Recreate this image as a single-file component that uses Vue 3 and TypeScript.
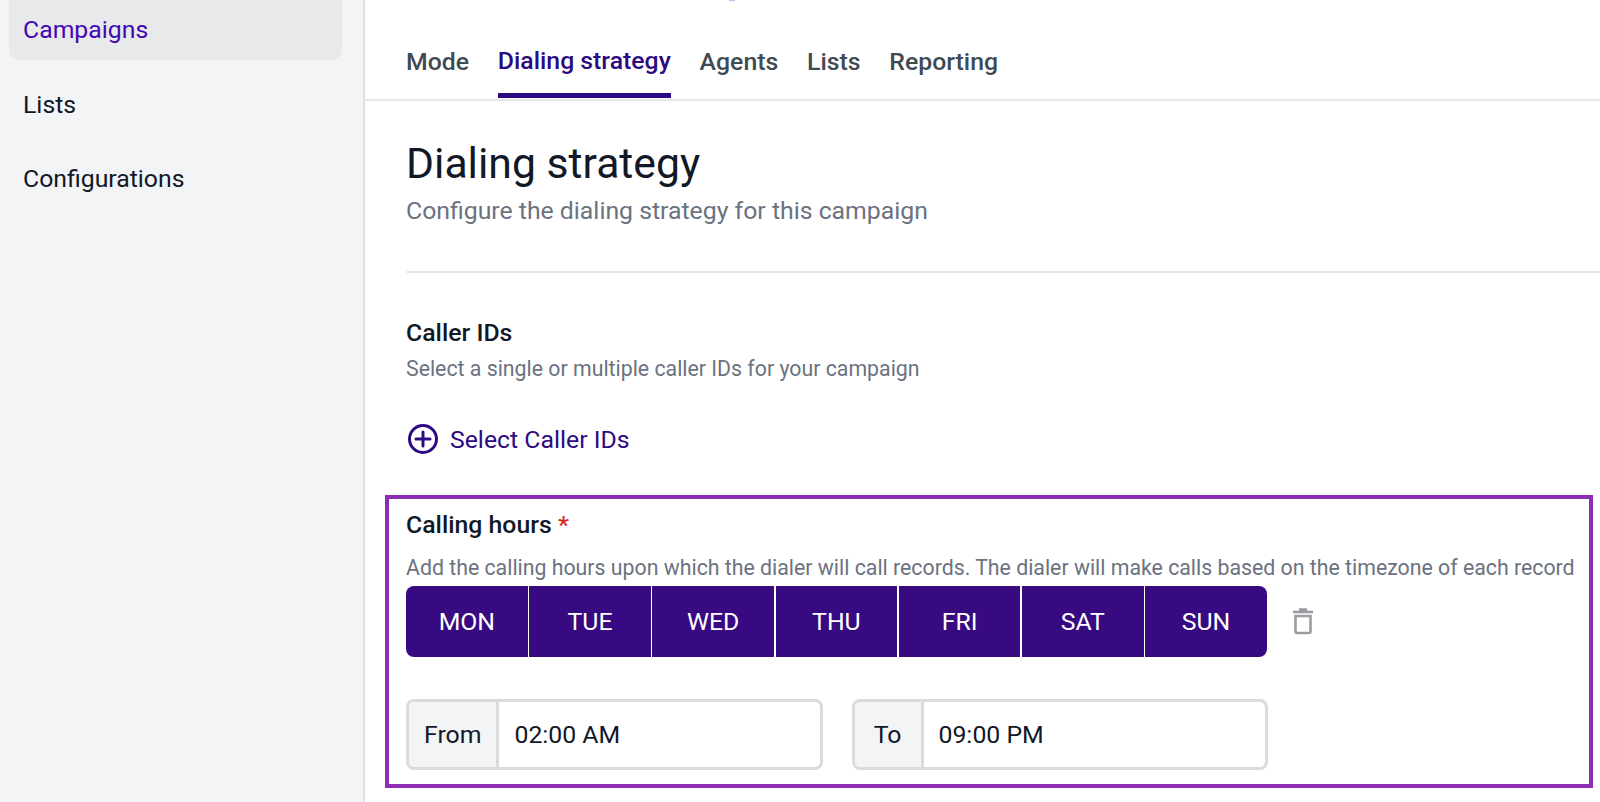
<script setup lang="ts">
const navItems = ['Campaigns', 'Lists', 'Configurations']
const tabs = ['Mode', 'Dialing strategy', 'Agents', 'Lists', 'Reporting']
const days = ['MON', 'TUE', 'WED', 'THU', 'FRI', 'SAT', 'SUN']
const hours = [
  { label: 'From', value: '02:00 AM' },
  { label: 'To', value: '09:00 PM' }
]
</script>

<template>
  <div class="page">
    <aside class="sidebar">
      <a
        v-for="(item, i) in navItems"
        :key="item"
        class="nav-item"
        :class="{ active: i === 0 }"
      >{{ item }}</a>
    </aside>

    <main class="main">
      <nav class="tabs">
        <!-- tail of a heading cut off by the top of the page -->
        <span class="cut-off"></span>
        <a
          v-for="tab in tabs"
          :key="tab"
          class="tab"
          :class="{ active: tab === 'Dialing strategy' }"
        >{{ tab }}</a>
      </nav>

      <div class="content">
        <header class="head">
          <h1 class="title">Dialing strategy</h1>
          <p class="subtitle">Configure the dialing strategy for this campaign</p>
        </header>

        <section class="caller-ids">
          <h2 class="label">Caller IDs</h2>
          <p class="hint">Select a single or multiple caller IDs for your campaign</p>
          <a class="add-link">
            <svg width="32" height="32" viewBox="0 0 32 32" fill="none" stroke="#2e0a82" stroke-width="3">
              <circle cx="16" cy="16" r="13.5" />
              <path d="M16 9v14M9 16h14" stroke-linecap="round" />
            </svg>
            Select Caller IDs
          </a>
        </section>

        <section class="hours">
          <h2 class="label">Calling hours <span class="req">*</span></h2>
          <p class="hint hint-tight">Add the calling hours upon which the dialer will call records. The dialer will make calls based on the timezone of each record</p>

          <div class="days-row">
            <div class="days">
              <button v-for="d in days" :key="d" class="day">{{ d }}</button>
            </div>
            <svg class="trash" width="24" height="28" viewBox="0 0 24 28" fill="none">
              <path d="M8 2.5h8M2 5h20" stroke="#9a9ca1" stroke-width="2.4" />
              <path d="M4.5 9h15v15.5a1.5 1.5 0 0 1-1.5 1.5H6a1.5 1.5 0 0 1-1.5-1.5z" stroke="#9a9ca1" stroke-width="2.6" />
            </svg>
          </div>

          <div class="time-row">
            <div v-for="h in hours" :key="h.label" class="time-field">
              <span class="addon">{{ h.label }}</span>
              <span class="time-value">{{ h.value }}</span>
            </div>
          </div>
        </section>
      </div>
    </main>
  </div>
</template>

<style>
html, body { margin: 0; background: #fff; }
</style>

<style scoped>
.page {
  display: flex;
  width: 1600px;
  height: 802px;
  overflow: hidden;
  font-family: Roboto, 'Liberation Sans', sans-serif;
  color: #111827;
}

.sidebar {
  width: 365px;
  flex-shrink: 0;
  box-sizing: border-box;
  background: #f3f4f6;
  border-right: 2px solid #dfe1e5;
  padding: 0 21px 0 9px;
  display: flex;
  flex-direction: column;
  gap: 14px;
  margin-top: -10px;
}
.nav-item {
  height: 60px;
  padding: 0 14px;
  display: flex;
  align-items: center;
  font-size: 24.8px;
  border-radius: 10px;
  color: #111827;
}
.nav-item.active {
  height: 70px;
  padding-top: 8px;
  box-sizing: border-box;
  background: #e8e9eb;
  color: #4308b5;
}

.main { flex: 1; min-width: 0; }

.tabs {
  position: relative;
  height: 101px;
  box-sizing: border-box;
  border-bottom: 2px solid #e5e7eb;
  padding: 0 0 0 41px;
  display: flex;
  align-items: flex-end;
  gap: 28.8px;
}
.cut-off {
  position: absolute;
  top: 0;
  left: 364px;
  width: 6px;
  height: 1px;
  background: #c4b8e4;
}
.tab {
  height: 62px;
  box-sizing: border-box;
  font-size: 24.8px;
  font-weight: 500;
  line-height: 50px;
  color: #414a53;
}
.tab.active {
  color: #2e0a82;
  border-bottom: 5px solid #2e0a82;
  margin-bottom: 1px;
}

.content { padding-left: 41px; }

.head {
  padding: 36px 0 45px;
  border-bottom: 2px solid #e5e7eb;
}
.title {
  margin: 0;
  font-size: 42.7px;
  font-weight: 400;
  line-height: 52px;
  color: #111827;
}
.subtitle {
  margin: 7px 0 0;
  font-size: 24.8px;
  line-height: 30px;
  color: #6b7280;
}

.caller-ids { padding-top: 45px; }
.label {
  margin: 0;
  font-size: 24.8px;
  font-weight: 500;
  line-height: 30px;
  color: #111827;
}
.req { color: #d32f1e; }
.hint {
  margin: 7px 0 0;
  font-size: 21.3px;
  line-height: 28px;
  color: #6b7280;
  white-space: nowrap;
}
.hint-tight { margin-top: 14px; }
.add-link {
  margin-top: 40px;
  display: flex;
  align-items: center;
  gap: 11px;
  font-size: 24.8px;
  color: #2e0a82;
}
.add-link svg { margin-left: 1px; }

.hours {
  margin: 40px 7px 0 -21px;
  height: 293px;
  box-sizing: border-box;
  border: 4px solid #8c2eb5;
  padding: 11px 0 0 17px;
}

.days-row { display: flex; align-items: center; gap: 24px; margin-top: 4px; }
.days {
  display: flex;
  gap: 1.5px;
  border-radius: 8px;
  overflow: hidden;
}
.day {
  width: 121.7px;
  height: 71px;
  border: 0;
  padding: 0;
  background: #380a82;
  color: #fff;
  font-family: inherit;
  font-size: 24.8px;
}
.trash { margin-top: -2px; }

.time-row { display: flex; gap: 29px; margin-top: 42px; }
.time-field {
  width: 416.5px;
  height: 71px;
  box-sizing: border-box;
  display: flex;
  border: 3px solid #d9dbde;
  border-radius: 8px;
  overflow: hidden;
  font-size: 24.8px;
}
.addon {
  display: flex;
  align-items: center;
  justify-content: center;
  min-width: 69px;
  box-sizing: border-box;
  padding: 0 15px;
  background: #f3f4f6;
  border-right: 3px solid #d9dbde;
}
.time-value {
  display: flex;
  align-items: center;
  padding-left: 15px;
}
</style>
